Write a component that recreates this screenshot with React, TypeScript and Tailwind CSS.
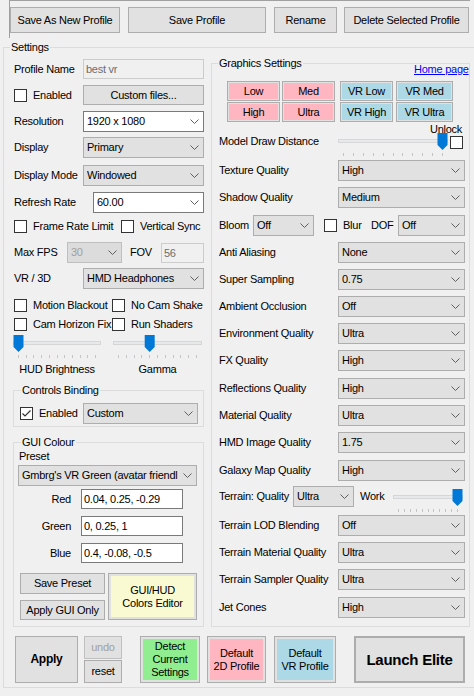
import clsx from 'clsx';
import type { ReactNode } from 'react';

function Chevron() {
  return (
    <svg width="9" height="5" viewBox="0 0 9 5" className="shrink-0">
      <polyline points="0.5,0.5 4.5,4.5 8.5,0.5" fill="none" stroke="#5f5f5f" strokeWidth="1" />
    </svg>
  );
}

type SelectProps = { value: string; w: string; white?: boolean; disabled?: boolean; className?: string };

function Select({ value, w, white, disabled, className }: SelectProps) {
  return (
    <div
      className={clsx(
        'flex h-[21px] shrink-0 items-center border pl-[3px] pr-[4px]',
        w,
        white && 'border-[#7a7a7a] bg-white',
        disabled && 'border-[#bfbfbf] bg-[#dcdcdc] text-[#a0a0a0]',
        !white && !disabled && 'border-[#adadad] bg-[#e1e1e1]',
        className,
      )}
    >
      <span className="flex-1 overflow-hidden whitespace-nowrap">{value}</span>
      <Chevron />
    </div>
  );
}

function Box({ checked, className }: { checked?: boolean; className?: string }) {
  return (
    <span className={clsx('flex h-[13px] w-[13px] shrink-0 border border-[#333333] bg-white', className)}>
      {checked && (
        <svg width="11" height="11" viewBox="0 0 11 11">
          <polyline points="1.5,5.5 4,8 9.5,2.5" fill="none" stroke="#333333" strokeWidth="1.2" />
        </svg>
      )}
    </span>
  );
}

function Check({ label, checked, className }: { label: string; checked?: boolean; className?: string }) {
  return (
    <div className={clsx('flex items-center', className)}>
      <Box checked={checked} />
      <span className="ml-[6px] whitespace-nowrap">{label}</span>
    </div>
  );
}

function Btn({ className, children }: { className?: string; children: ReactNode }) {
  return (
    <button
      type="button"
      className={clsx('flex shrink-0 items-center justify-center border border-[#adadad] bg-[#e1e1e1] text-center', className)}
    >
      {children}
    </button>
  );
}

function Tile({ bg, pad, className, children }: { bg: string; pad: string; className?: string; children: ReactNode }) {
  return (
    <button type="button" className={clsx('flex shrink-0 border border-[#adadad] bg-[#e1e1e1]', pad, className)}>
      <span className={clsx('flex flex-1 items-center justify-center text-center leading-[13px]', bg)}>{children}</span>
    </button>
  );
}

function Slider({ w, pos, className }: { w: number; pos: number; className?: string }) {
  const span = w - 11;
  const x = (pos / 10) * span;
  const ticks = Array.from({ length: 11 }, (_, i) => Math.round(5 + (i * span) / 10) + 0.5);
  return (
    <svg width={w} height={25} className={clsx('shrink-0', className)}>
      <rect x="0.5" y="7.5" width={w - 1} height="3" fill="#e7eaea" stroke="#d6d6d6" />
      {ticks.map((t) => (
        <line key={t} x1={t} x2={t} y1="21" y2="24" stroke="#c4c4c4" />
      ))}
      <path d={`M${x + 0.5} 1 H${x + 10.5} V13 L${x + 5.5} 18 L${x + 0.5} 13 Z`} fill="#0078d7" />
    </svg>
  );
}

const graphicsTop = [
  { label: 'Texture Quality', value: 'High', mt: 'mt-[0px]' },
  { label: 'Shadow Quality', value: 'Medium', mt: 'mt-[6px]' },
];

const graphicsMid = [
  { label: 'Anti Aliasing', value: 'None', mt: 'mt-[6px]' },
  { label: 'Super Sampling', value: '0.75', mt: 'mt-[6px]' },
  { label: 'Ambient Occlusion', value: 'Off', mt: 'mt-[6px]' },
  { label: 'Environment Quality', value: 'Ultra', mt: 'mt-[6px]' },
  { label: 'FX Quality', value: 'High', mt: 'mt-[6px]' },
  { label: 'Reflections Quality', value: 'High', mt: 'mt-[7px]' },
  { label: 'Material Quality', value: 'Ultra', mt: 'mt-[6px]' },
  { label: 'HMD Image Quality', value: '1.75', mt: 'mt-[6px]' },
  { label: 'Galaxy Map Quality', value: 'High', mt: 'mt-[7px]' },
];

const graphicsEnd = [
  { label: 'Terrain LOD Blending', value: 'Off', mt: 'mt-[8px]' },
  { label: 'Terrain Material Quality', value: 'Ultra', mt: 'mt-[6px]' },
  { label: 'Terrain Sampler Quality', value: 'Ultra', mt: 'mt-[6px]' },
  { label: 'Jet Cones', value: 'High', mt: 'mt-[7px]' },
];

function GfxRow({ label, value, mt }: { label: string; value: string; mt: string }) {
  return (
    <div className={clsx('flex h-[21px] items-center', mt)}>
      <span className="w-[126px] whitespace-nowrap pl-[7px]">{label}</span>
      <Select w="w-[127px]" value={value} />
    </div>
  );
}

export default function App() {
  return (
    <div className="h-[696px] w-[474px] overflow-hidden bg-[#f0f0f0] font-['Liberation_Sans',Arial,sans-serif] text-[11px] leading-[13px] tracking-[-0.25px] text-black">
      {/* profile buttons */}
      <div className="ml-[9px] flex h-[38px] w-[461px] items-start border-l border-t border-[#a0a0a0]">
        <Btn className="mt-[6px] h-[26px] w-[110px]">Save As New Profile</Btn>
        <Btn className="ml-[8px] mt-[6px] h-[26px] w-[138px]">Save Profile</Btn>
        <Btn className="ml-[8px] mt-[6px] h-[26px] w-[63px]">Rename</Btn>
        <Btn className="ml-[7px] mt-[6px] h-[26px] w-[125px]">Delete Selected Profile</Btn>
      </div>

      <fieldset className="relative ml-[3px] mt-[2px] w-[480px] border border-[#dcdcdc] pb-[4px]">
        <legend className="ml-[6px] px-[1px] leading-[14px]">Settings</legend>
        <a className="absolute left-[410px] top-[9px] text-[#0000ff] underline">Home page</a>

        <div className="flex items-start">
          {/* left column */}
          <div className="ml-[9px] flex w-[191px] shrink-0 flex-col">
            <div className="mt-[5px] flex h-[20px] items-center">
              <span className="w-[70px] pl-[1px]">Profile Name</span>
              <input
                readOnly
                value="best vr"
                className="h-[20px] w-[121px] border border-[#cccccc] bg-[#f0f0f0] px-[2px] text-[#6d6d6d] outline-none"
              />
            </div>
            <div className="mt-[6px] flex h-[20px] items-center">
              <Check label="Enabled" className="w-[70px] pl-[1px]" />
              <Btn className="h-[20px] w-[121px]">Custom files...</Btn>
            </div>
            <div className="mt-[6px] flex h-[21px] items-center">
              <span className="w-[70px] pl-[1px]">Resolution</span>
              <Select white w="w-[121px]" value="1920 x 1080" />
            </div>
            <div className="mt-[5px] flex h-[21px] items-center">
              <span className="w-[70px] pl-[1px]">Display</span>
              <Select w="w-[121px]" value="Primary" />
            </div>
            <div className="mt-[7px] flex h-[21px] items-center">
              <span className="w-[70px] whitespace-nowrap pl-[1px]">Display Mode</span>
              <Select w="w-[121px]" value="Windowed" />
            </div>
            <div className="mt-[6px] flex h-[21px] items-center">
              <span className="w-[80px] pl-[1px]">Refresh Rate</span>
              <Select white w="w-[111px]" value="60.00" />
            </div>
            <div className="mt-[6px] flex h-[15px] items-center">
              <Check label="Frame Rate Limit" className="w-[108px] pl-[1px]" />
              <Check label="Vertical Sync" />
            </div>
            <div className="mt-[8px] flex h-[21px] items-center">
              <span className="w-[54px] pl-[1px]">Max FPS</span>
              <Select disabled w="w-[55px]" value="30" />
              <span className="ml-[8px] w-[31px]">FOV</span>
              <input
                readOnly
                value="56"
                className="h-[20px] w-[43px] border border-[#cccccc] bg-[#f0f0f0] px-[2px] text-[#6d6d6d] outline-none"
              />
            </div>
            <div className="mt-[5px] flex h-[21px] items-center">
              <span className="w-[70px] pl-[1px]">VR / 3D</span>
              <Select w="w-[121px]" value="HMD Headphones" />
            </div>
            <div className="mt-[9px] flex h-[15px] items-center">
              <Check label="Motion Blackout" className="w-[99px] pl-[1px]" />
              <Check label="No Cam Shake" />
            </div>
            <div className="mt-[4px] flex h-[15px] items-center">
              <Check label="Cam Horizon Fix" className="w-[99px] pl-[1px]" />
              <Check label="Run Shaders" />
            </div>
            <div className="mt-[2px] flex gap-[12px]">
              <Slider w={88} pos={0} />
              <Slider w={89} pos={4} />
            </div>
            <div className="mt-[3px] flex gap-[12px] leading-[14px]">
              <span className="w-[88px] text-center">HUD Brightness</span>
              <span className="w-[89px] text-center">Gamma</span>
            </div>

            <fieldset className="mt-[7px] border border-[#dcdcdc] pb-[2px]">
              <legend className="ml-[7px] px-[1px] leading-[14px]">Controls Binding</legend>
              <div className="mt-[6px] flex h-[21px] items-center pl-[6px] pr-[5px]">
                <Check checked label="Enabled" />
                <Select className="ml-auto" w="w-[115px]" value="Custom" />
              </div>
            </fieldset>

            <fieldset className="mt-[8px] border border-[#dcdcdc] pb-[6px]">
              <legend className="ml-[7px] px-[1px] leading-[14px]">GUI Colour</legend>
              <div className="mt-[1px] pl-[5px]">Preset</div>
              <Select className="ml-[4px] mt-[2px]" w="w-[179px]" value="Gmbrg's VR Green (avatar friendl" />
              <div className="mt-[3px] flex h-[20px] items-center">
                <span className="w-[57px] text-right">Red</span>
                <input readOnly value="0.04, 0.25, -0.29" className="ml-[10px] h-[20px] w-[102px] border border-[#7a7a7a] bg-white px-[2px] outline-none" />
              </div>
              <div className="mt-[7px] flex h-[20px] items-center">
                <span className="w-[57px] text-right">Green</span>
                <input readOnly value="0, 0.25, 1" className="ml-[10px] h-[20px] w-[102px] border border-[#7a7a7a] bg-white px-[2px] outline-none" />
              </div>
              <div className="mt-[7px] flex h-[20px] items-center">
                <span className="w-[57px] text-right">Blue</span>
                <input readOnly value="0.4, -0.08, -0.5" className="ml-[10px] h-[20px] w-[102px] border border-[#7a7a7a] bg-white px-[2px] outline-none" />
              </div>
              <div className="mt-[10px] flex pl-[6px]">
                <div className="flex w-[85px] flex-col gap-[6px]">
                  <Btn className="h-[21px] w-[85px]">Save Preset</Btn>
                  <Btn className="h-[20px] w-[85px]">Apply GUI Only</Btn>
                </div>
                <Tile bg="bg-[#fafad2]" pad="p-[2px]" className="ml-[3px] h-[47px] w-[89px]">
                  GUI/HUD
                  <br />
                  Colors Editor
                </Tile>
              </div>
            </fieldset>
          </div>

          {/* graphics */}
          <fieldset className="ml-[7px] mt-[2px] w-[259px] shrink-0 border border-[#dcdcdc] pb-[8px]">
            <legend className="ml-[6px] px-[1px] leading-[14px]">Graphics Settings</legend>
            <div className="mt-[11px] flex h-[20px]">
              <Tile bg="bg-[#ffb6c1]" pad="p-[1px]" className="ml-[15px] w-[53px]">Low</Tile>
              <Tile bg="bg-[#ffb6c1]" pad="p-[1px]" className="ml-[2px] w-[53px]">Med</Tile>
              <Tile bg="bg-[#add8e6]" pad="p-[1px]" className="ml-[5px] w-[53px]">VR Low</Tile>
              <Tile bg="bg-[#add8e6]" pad="p-[1px]" className="ml-[3px] w-[57px]">VR Med</Tile>
            </div>
            <div className="mt-[1px] flex h-[20px]">
              <Tile bg="bg-[#ffb6c1]" pad="p-[1px]" className="ml-[15px] w-[53px]">High</Tile>
              <Tile bg="bg-[#ffb6c1]" pad="p-[1px]" className="ml-[2px] w-[53px]">Ultra</Tile>
              <Tile bg="bg-[#add8e6]" pad="p-[1px]" className="ml-[5px] w-[53px]">VR High</Tile>
              <Tile bg="bg-[#add8e6]" pad="p-[1px]" className="ml-[3px] w-[57px]">VR Ultra</Tile>
            </div>
            <div className="flex h-[38px] items-start">
              <span className="mt-[12px] w-[126px] whitespace-nowrap pl-[7px] leading-[14px]">Model Draw Distance</span>
              <Slider w={110} pos={10} className="mt-[10px]" />
              <div className="-ml-[18px] flex w-[33px] flex-col">
                <span className="mt-[1px] leading-[12px]">Unlock</span>
                <Box className="mt-[1px] self-end" />
              </div>
            </div>
            {graphicsTop.map((r) => (
              <GfxRow key={r.label} {...r} />
            ))}
            <div className="mt-[7px] flex h-[21px] items-center">
              <span className="w-[41px] pl-[7px]">Bloom</span>
              <Select w="w-[61px]" value="Off" />
              <Check label="Blur" className="ml-[10px] w-[47px]" />
              <span className="w-[27px]">DOF</span>
              <Select w="w-[67px]" value="Off" />
            </div>
            {graphicsMid.map((r) => (
              <GfxRow key={r.label} {...r} />
            ))}
            <div className="mt-[5px] flex h-[21px] items-center">
              <span className="w-[81px] whitespace-nowrap pl-[7px]">Terrain: Quality</span>
              <Select w="w-[61px]" value="Ultra" />
              <span className="ml-[6px] w-[33px]">Work</span>
              <Slider w={70} pos={10} className="mt-[2px] self-start" />
            </div>
            {graphicsEnd.map((r) => (
              <GfxRow key={r.label} {...r} />
            ))}
          </fieldset>
        </div>

        {/* bottom actions */}
        <div className="mt-[9px] flex h-[47px] pl-[11px]">
          <Btn className="h-[47px] w-[63px] text-[12px] font-bold">Apply</Btn>
          <div className="ml-[6px] flex w-[38px] flex-col gap-[1px]">
            <Btn className="h-[23px] w-[38px] border-[#bfbfbf] bg-[#cccccc] text-[#a0a0a0]">undo</Btn>
            <Btn className="h-[23px] w-[38px]">reset</Btn>
          </div>
          <Tile bg="bg-[#90ee90]" pad="p-[2px]" className="ml-[18px] w-[60px]">
            Detect
            <br />
            Current
            <br />
            Settings
          </Tile>
          <Tile bg="bg-[#ffb6c1]" pad="p-[2px]" className="ml-[7px] w-[59px]">
            Default
            <br />
            2D Profile
          </Tile>
          <Tile bg="bg-[#add8e6]" pad="p-[2px]" className="ml-[8px] w-[62px]">
            Default
            <br />
            VR Profile
          </Tile>
          <Btn className="ml-[18px] h-[47px] w-[111px] border-2 border-[#0078d7] text-[15px] font-bold">Launch Elite</Btn>
        </div>
      </fieldset>
    </div>
  );
}
